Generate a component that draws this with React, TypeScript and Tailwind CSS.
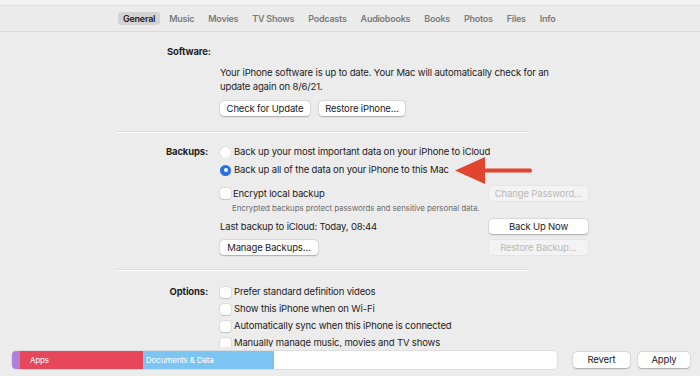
import React from 'react'

const tabs = ['General', 'Music', 'Movies', 'TV Shows', 'Podcasts', 'Audiobooks', 'Books', 'Photos', 'Files', 'Info']

function Button({ label, width, disabled }: { label: string, width: string, disabled?: boolean }) {
	return (
		<div
			className={`${width} h-[15px] flex items-center justify-center whitespace-nowrap rounded-[4px] text-[9.5px] leading-none ${
				disabled
					? 'bg-[#f3f3f3] text-[#b9b9b9] shadow-[0_0_0_0.5px_rgba(0,0,0,0.06)]'
					: 'bg-white text-[#222] shadow-[0_0.5px_1.5px_rgba(0,0,0,0.25),0_0_0_0.5px_rgba(0,0,0,0.08)]'
			}`}
		>
			{label}
		</div>
	)
}

function Check() {
	return <div className="w-[11px] h-[11px] rounded-[3px] bg-white shadow-[0_0_0_0.5px_rgba(0,0,0,0.12),0_0.5px_1px_rgba(0,0,0,0.12)] shrink-0" />
}

function Radio({ on }: { on?: boolean }) {
	if (on) {
		return (
			<div className="w-[11px] h-[11px] rounded-full bg-[#2d6fe0] flex items-center justify-center shrink-0">
				<div className="w-[4px] h-[4px] rounded-full bg-white" />
			</div>
		)
	}
	return <div className="w-[11px] h-[11px] rounded-full bg-white shadow-[0_0_0_0.5px_rgba(0,0,0,0.1)] shrink-0" />
}

function Separator({ mt }: { mt: string }) {
	return <div className={`${mt} ml-[117px] w-[411px] h-[2px] border-t border-[#dcdcdc] border-b-white border-b shrink-0`} />
}

function Label({ text }: { text: string }) {
	return <div className="w-[208px] text-right font-bold text-[#1f1f1f] shrink-0">{text}</div>
}

export default function App() {
	return (
		<div className="w-[700px] h-[376px] bg-[#ececec] flex flex-col overflow-hidden font-['Inter','Liberation_Sans',sans-serif] text-[9.5px] tracking-[-0.15px] text-[#222] leading-[14px]">
			<div className="h-[6px] bg-[#f1f1f1] border-b border-[#e0e0e0] shrink-0" />
			<div className="h-[26px] bg-[#ebebeb] border-b border-[#dadada] flex items-center pl-[118px] gap-[4px] shrink-0">
				{tabs.map((tab, i) => (
					<div
						key={tab}
						className={`px-[5px] h-[13px] flex items-center rounded-[3px] text-[9px] tracking-[-0.25px] font-semibold ${
							i === 0 ? 'bg-[#d3d3d3] text-[#1f1f1f] font-bold' : 'text-[#7b7b7b]'
						}`}
					>
						{tab}
					</div>
				))}
			</div>

			<div className="flex-1 overflow-hidden flex flex-col">
				{/* Software */}
				<div className="mt-[13px] h-[14px] pl-[167px] font-bold text-[#1f1f1f] shrink-0">Software:</div>
				<p className="mt-[7px] pl-[220px] shrink-0">
					Your iPhone software is up to date. Your Mac will automatically check for an
					<br />
					update again on 8/6/21.
				</p>
				<div className="mt-[7px] pl-[220px] flex gap-[9px] shrink-0">
					<Button label="Check for Update" width="w-[90px]" />
					<Button label="Restore iPhone…" width="w-[86px]" />
				</div>

				<Separator mt="mt-[15px]" />

				{/* Backups */}
				<div className="mt-[12px] h-[14px] flex items-center shrink-0">
					<Label text="Backups:" />
					<div className="ml-[12px] flex items-center gap-[3px]">
						<Radio />
						<span>Back up your most important data on your iPhone to iCloud</span>
					</div>
				</div>
				<div className="mt-[4px] h-[14px] flex items-center relative shrink-0">
					<div className="ml-[220px] flex items-center gap-[3px]">
						<Radio on />
						<span>Back up all of the data on your iPhone to this Mac</span>
					</div>
					<svg className="absolute left-[455px] top-[-6px]" width="78" height="27" viewBox="0 0 78 27">
						<path d="M0 13.5 L30 0 L30 11.5 L76 11.5 Q78 13.5 76 15.5 L30 15.5 L30 27 Z" fill="#e2452f" />
					</svg>
				</div>
				<div className="mt-[9px] h-[15px] flex items-center pl-[220px] pr-[112px] shrink-0">
					<div className="flex-1 flex items-center gap-[2px]">
						<Check />
						<span>Encrypt local backup</span>
					</div>
					<Button label="Change Password…" width="w-[99px]" disabled />
				</div>
				<div className="mt-[1px] h-[12px] pl-[232px] text-[8px] leading-[12px] tracking-[-0.1px] text-[#6e6e6e] shrink-0">
					Encrypted backups protect passwords and sensitive personal data.
				</div>
				<div className="mt-[5px] h-[15px] flex items-center pl-[220px] pr-[112px] shrink-0">
					<div className="flex-1">Last backup to iCloud: Today, 08:44</div>
					<Button label="Back Up Now" width="w-[99px]" />
				</div>
				<div className="mt-[6px] h-[15px] flex items-center pl-[220px] pr-[112px] shrink-0">
					<div className="flex-1">
						<Button label="Manage Backups…" width="w-[98px]" />
					</div>
					<Button label="Restore Backup…" width="w-[99px]" disabled />
				</div>

				<Separator mt="mt-[14px]" />

				{/* Options */}
				<div className="mt-[14px] h-[14px] flex items-center shrink-0">
					<Label text="Options:" />
					<div className="ml-[12px] flex items-center gap-[3px]">
						<Check />
						<span>Prefer standard definition videos</span>
					</div>
				</div>
				{['Show this iPhone when on Wi-Fi', 'Automatically sync when this iPhone is connected', 'Manually manage music, movies and TV shows'].map(t => (
					<div key={t} className="mt-[3px] h-[14px] flex items-center pl-[220px] gap-[3px] shrink-0">
						<Check />
						<span>{t}</span>
					</div>
				))}
			</div>

			<div className="h-[29px] shrink-0 bg-[#ececec] flex items-start pt-[4px] pl-[12px] pr-[10px] relative z-10">
				<div className="w-[545px] h-[18px] rounded-[4px] bg-white flex overflow-hidden shadow-[0_0_0_0.5px_rgba(0,0,0,0.12)] text-[8px] leading-[18px] text-white">
					<div className="w-[8px] bg-[#b07fd9]" />
					<div className="w-[123px] bg-[#e8465a] pl-[10px]">Apps</div>
					<div className="w-[131px] bg-[#7cc4f2] pl-[3px]">Documents &amp; Data</div>
				</div>
				<div className="ml-[16px] mt-[1px] flex gap-[8px]">
					<Button label="Revert" width="w-[57px] !h-[16px]" />
					<Button label="Apply" width="w-[52px] !h-[16px]" />
				</div>
			</div>
		</div>
	)
}
